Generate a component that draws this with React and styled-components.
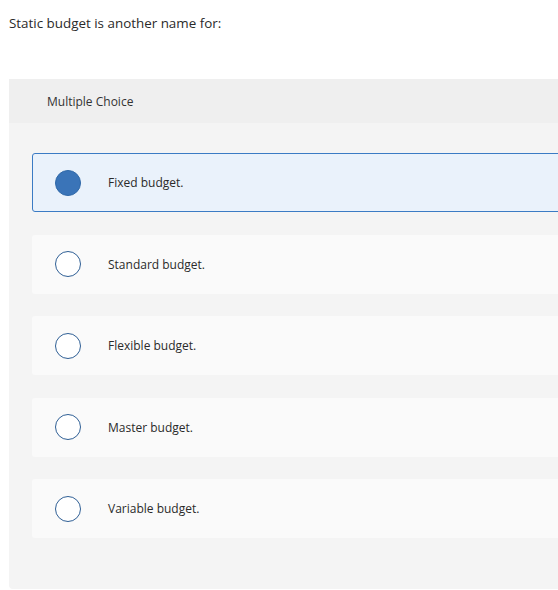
import React from "react";
import styled, { createGlobalStyle } from "styled-components";

const Global = createGlobalStyle`
  html, body { margin: 0; padding: 0; overflow: hidden; background: #fff; }
  body { font-family: "Open Sans", "Liberation Sans", sans-serif; color: #222; }
`;

const Page = styled.div`
  padding: 14px 0 0 9px;
  width: 620px;
`;

const Question = styled.p`
  margin: 0 0 47px 0;
  font-size: 13.4px;
  line-height: 18px;
  color: #2a2a2a;
`;

const Panel = styled.section`
  background: #f4f4f4;
  border-radius: 0 0 0 4px;
  padding-bottom: 51px;
`;

const Header = styled.div`
  background: #efefef;
  height: 44px;
  display: flex;
  align-items: center;
  padding-left: 38px;
  font-size: 12px;
  color: #333;
`;

const List = styled.div`
  display: flex;
  flex-direction: column;
  gap: 22.5px;
  padding: 30px 0 0 23px;
`;

const Option = styled.label`
  display: flex;
  align-items: center;
  box-sizing: border-box;
  height: 59px;
  border-radius: 3px;
  border: 1px solid ${(p) => (p.$selected ? "#3b7bc4" : "transparent")};
  background: ${(p) => (p.$selected ? "#eaf2fb" : "#fafafa")};
  padding-left: 22px;
  cursor: pointer;
`;

const Radio = styled.span`
  box-sizing: border-box;
  width: 26px;
  height: 26px;
  border-radius: 50%;
  border: 1.5px solid ${(p) => (p.$selected ? "#2f68a8" : "#2f5f95")};
  background: ${(p) => (p.$selected ? "#3a74b8" : "#fff")};
  flex-shrink: 0;
`;

const Label = styled.span`
  margin-left: 27px;
  font-size: 12px;
  color: #2a2a2a;
`;

const options = [
  "Fixed budget.",
  "Standard budget.",
  "Flexible budget.",
  "Master budget.",
  "Variable budget.",
];

export default function App() {
  return (
    <>
      <Global />
      <Page>
        <Question>Static budget is another name for:</Question>
        <Panel>
          <Header>Multiple Choice</Header>
          <List>
            {options.map((o, i) => (
              <Option key={o} $selected={i === 0}>
                <Radio $selected={i === 0} />
                <Label>{o}</Label>
              </Option>
            ))}
          </List>
        </Panel>
      </Page>
    </>
  );
}
